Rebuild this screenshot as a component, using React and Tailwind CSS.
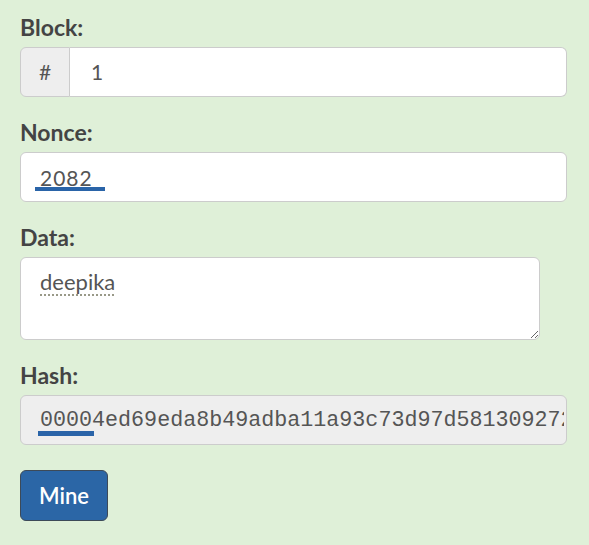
import React from 'react';

const sans = { fontFamily: 'Lato, "Open Sans", sans-serif' };

const hash = '00004ed69eda8b49adba11a93c73d97d5813092726b4a0fc5a4c1f76b97e1e9c';

const Label = ({ children }) => (
  <label className="block text-[23px] leading-[30px] font-bold text-[#444] mb-[5px]">{children}</label>
);

const App = () => {
  return (
    <div className="min-h-screen bg-[#dff0d8] pt-[12px] pl-[20px] pr-[22px]" style={sans}>
      {/* Block */}
      <div className="mb-[20px]">
        <Label>Block:</Label>
        <div className="flex h-[50px] w-[547px]">
          <span className="w-[50px] flex items-center justify-center bg-[#eee] border border-[#ccc] rounded-l-[6px] text-[21px] text-[#555]">#</span>
          <input
            readOnly
            value="1"
            className="flex-1 min-w-0 bg-white border border-l-0 border-[#ccc] rounded-r-[6px] pl-[21px] text-[21px] text-[#555] outline-none"
          />
        </div>
      </div>

      {/* Nonce */}
      <div className="mb-[20px]">
        <Label>Nonce:</Label>
        <div className="relative w-[547px]">
          <input
            readOnly
            value="2082"
            className="w-full h-[50px] bg-white border border-[#ccc] rounded-[6px] pl-[19px] text-[21px] tracking-[1px] text-[#555] outline-none"
          />
          <span className="absolute left-[15px] top-[35px] w-[70px] h-[4px] bg-[#2a64a8]" />
        </div>
      </div>

      {/* Data */}
      <div className="mb-[20px]">
        <Label>Data:</Label>
        <textarea
          readOnly
          spellCheck={false}
          value="deepika"
          className="block w-[520px] h-[83px] bg-white border border-[#ccc] rounded-[6px] px-[19px] py-[9px] text-[22px] leading-[30px] text-[#555] outline-none underline decoration-dotted decoration-[#998] decoration-2 underline-offset-[4px]"
        />
      </div>

      {/* Hash */}
      <div className="mb-[25px]">
        <Label>Hash:</Label>
        <div className="relative w-[547px]">
          <input
            readOnly
            value={hash}
            className="w-full h-[50px] bg-[#eee] border border-[#ccc] rounded-[6px] pl-[19px] pr-[2px] text-[21.7px] text-[#555] outline-none"
            style={{ fontFamily: '"Liberation Mono", "Courier New", monospace' }}
          />
          <span className="absolute left-[18px] top-[36px] w-[56px] h-[5px] bg-[#2a64a8]" />
        </div>
      </div>

      <button className="h-[51px] px-[18px] bg-[#2b66a6] border border-[#3d4a58] rounded-[6px] text-[22px] text-white font-semibold">
        Mine
      </button>
    </div>
  );
};

export default App;
